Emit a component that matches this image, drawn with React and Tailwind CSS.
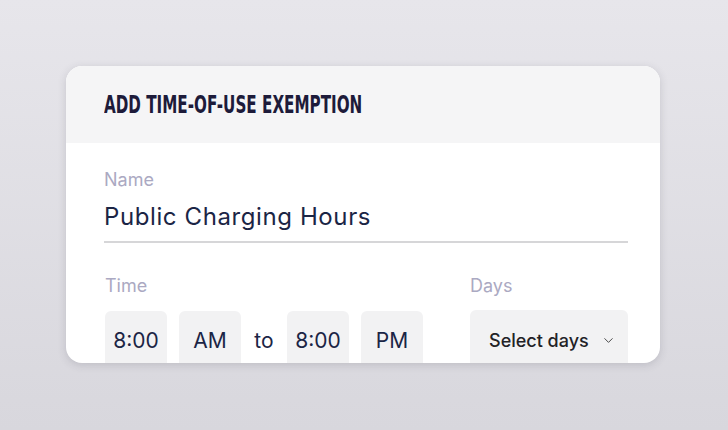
import React from "react";
import { ChevronDown } from "lucide-react";

function TimeBox({ children }) {
  return (
    <div className="w-[62px] h-[60px] rounded-md bg-[#f2f2f3] flex items-center justify-center text-[21px] text-[#1b2545]">
      {children}
    </div>
  );
}

export default function App() {
  return (
    <div
      className="w-[728px] h-[430px] bg-gradient-to-b from-[#e7e6eb] to-[#d8d7dd] pt-[66px] pl-[66px]"
      style={{ fontFamily: "Inter, 'Noto Sans', sans-serif" }}
    >
      <div className="w-[594px] h-[297px] rounded-2xl bg-white overflow-hidden shadow-[0_2px_8px_rgba(60,60,80,0.18)]">
        <div className="h-[77px] bg-[#f5f5f6] pl-[38px] pr-[32px] flex items-center">
          <h1
            className="text-[25px] font-bold text-[#1d1b3a] origin-left scale-x-[0.675] whitespace-nowrap"
            style={{ fontFamily: "'DejaVu Sans Condensed', 'DejaVu Sans', sans-serif" }}
          >
            ADD TIME-OF-USE EXEMPTION
          </h1>
        </div>

        <div className="pl-[38px] pr-[32px] pt-[25px]">
          <div className="text-[18px] text-[#aba9c2] leading-6">Name</div>
          <div className="mt-[9px] text-[24px] text-[#1b2545] leading-8 tracking-[0.6px] pb-[8px] border-b-2 border-[#d6d6d8]">
            Public Charging Hours
          </div>

          <div className="mt-[31px] flex">
            <div className="w-[366px] pl-[1px]">
              <div className="text-[18px] text-[#aba9c2] leading-6">Time</div>
              <div className="mt-[13px] flex items-center gap-3">
                <TimeBox>8:00</TimeBox>
                <TimeBox>AM</TimeBox>
                <span className="text-[21px] text-[#1b2545] w-[22px] text-center">to</span>
                <TimeBox>8:00</TimeBox>
                <TimeBox>PM</TimeBox>
              </div>
            </div>
            <div className="w-[158px]">
              <div className="text-[18px] text-[#aba9c2] leading-6">Days</div>
              <div className="mt-[12px] h-[60px] rounded-md bg-[#f2f2f3] flex items-center justify-between pl-[19px] pr-[12px]">
                <span className="text-[18px] font-medium text-[#222226] whitespace-nowrap">Select days</span>
                <ChevronDown size={15} strokeWidth={1.4} className="text-[#333] shrink-0" />
              </div>
            </div>
          </div>
        </div>
      </div>
    </div>
  );
}
